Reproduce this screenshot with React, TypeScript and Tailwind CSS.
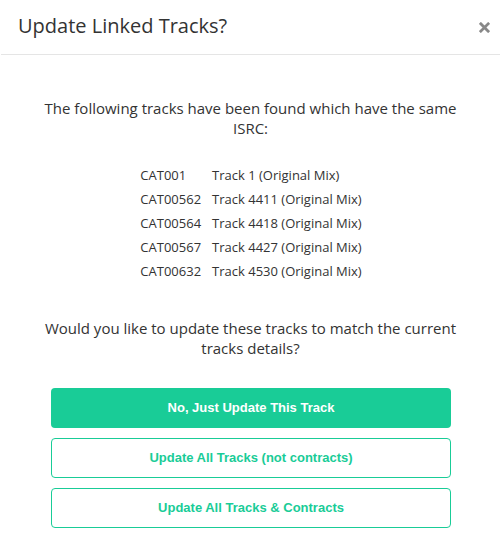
export default function App() {
  const tracks = [
    ["CAT001", "Track 1 (Original Mix)"],
    ["CAT00562", "Track 4411 (Original Mix)"],
    ["CAT00564", "Track 4418 (Original Mix)"],
    ["CAT00567", "Track 4427 (Original Mix)"],
    ["CAT00632", "Track 4530 (Original Mix)"],
  ];

  return (
    <div className="w-[501px] h-[539px] bg-white text-[#333] font-['Open_Sans',sans-serif]">
      {/* HEADER */}
      <div className="h-[55px] mx-[1px] border-b border-[#e5e5e5] flex items-center justify-between pl-[17px] pr-[9px]">
        <h4 className="text-[20px] leading-none pb-[2px]">Update Linked Tracks?</h4>
        <button className="w-[12px] h-[12px] mt-[1px]">
          <svg viewBox="0 0 12 12" className="w-[11px] h-[11px]">
            <path d="M2 2 L10 10 M10 2 L2 10" stroke="#888" strokeWidth="3" strokeLinecap="square" />
          </svg>
        </button>
      </div>

      {/* BODY */}
      <div className="pt-[43px]">
        <p className="px-[40px] text-center text-[15px] leading-[20px]">
          The following tracks have been found which have the same ISRC:
        </p>

        <div className="flex justify-center mt-[25px] text-[13px] pl-[1px]">
          <table className="leading-[24px]">
            <tbody>
              {tracks.map(([cat, name]) => (
                <tr key={cat}>
                  <td className="pr-[11px]">{cat}</td>
                  <td>{name}</td>
                </tr>
              ))}
            </tbody>
          </table>
        </div>

        <p className="px-[40px] text-center text-[15px] leading-[20px] mt-[35px]">
          Would you like to update these tracks to match the current tracks details?
        </p>

        <div className="mt-[30px] ml-[51px] w-[400px] flex flex-col gap-[10px] font-['Liberation_Sans',sans-serif] font-bold text-[13px]">
          <button className="h-[40px] rounded-[4px] bg-[#19cc97] text-white">
            No, Just Update This Track
          </button>
          <button className="h-[40px] rounded-[4px] border border-[#19cc97] text-[#19cc97] bg-white">
            Update All Tracks (not contracts)
          </button>
          <button className="h-[40px] rounded-[4px] border border-[#19cc97] text-[#19cc97] bg-white">
            Update All Tracks &amp; Contracts
          </button>
        </div>
      </div>
    </div>
  );
}
